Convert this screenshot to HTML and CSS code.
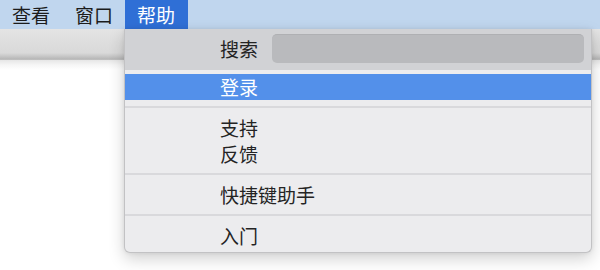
FILE: index.html
```html
<!DOCTYPE html>
<html lang="zh-CN">
<head>
<meta charset="utf-8">
<link rel="stylesheet" href="styles.css">
</head>
<body>
<div class="menubar">
  <div class="mb-item">查看</div>
  <div class="mb-item">窗口</div>
  <div class="mb-item active">帮助</div>
</div>
<div class="toolbar"></div>
<div class="content"></div>

<div class="menu">
  <div class="search-row">
    <span class="label">搜索</span>
    <div class="search-field"></div>
  </div>
  <div class="menu-body">
    <div class="item hl">登录</div>
    <div class="sep"></div>
    <div class="item">支持</div>
    <div class="item">反馈</div>
    <div class="sep"></div>
    <div class="item">快捷键助手</div>
    <div class="sep"></div>
    <div class="item">入门</div>
  </div>
</div>
</body>
</html>
```

FILE: styles.css
```css
* { box-sizing: border-box; }
html, body {
  margin: 0;
  padding: 0;
  width: 600px;
  height: 270px;
  overflow: hidden;
  background: #ffffff;
  font-family: "Noto Sans CJK SC", "Noto Sans", sans-serif;
}
.menubar {
  height: 29px;
  background: #c0d6ee;
  display: flex;
  align-items: stretch;
  font-size: 19px;
  color: #1c1c1c;
}
.mb-item {
  padding: 0 12px;
  display: flex;
  align-items: center;
  line-height: 1;
}
.mb-item:first-child { padding-left: 12px; padding-right: 13px; }
.mb-item.active {
  background: #2f6fd6;
  color: #ffffff;
  padding-right: 13px;
}
.toolbar {
  height: 31px;
  background: linear-gradient(to bottom, #e4e4e4 0px, #d9d9d9 24px, #c8c8c8 27px, #b7b7b7 30px, #c4c4c4 31px);
}
.content {
  height: 210px;
  background: linear-gradient(to bottom, #e6e6e6 0px, #f6f6f6 5px, #ffffff 10px);
}
.menu {
  position: absolute;
  left: 124px;
  top: 29px;
  width: 468px;
  height: 224px;
  background: #ececee;
  border: 1px solid #c2c2c4;
  border-top: none;
  border-radius: 0 0 6px 6px;
  box-shadow: 0 6px 16px rgba(0,0,0,0.18), 0 0 4px rgba(0,0,0,0.08);
  font-size: 19px;
  color: #242424;
  overflow: hidden;
}
.search-row {
  height: 41px;
  background: #d1d2d5;
  display: flex;
  align-items: center;
  padding-left: 95px;
  padding-right: 7px;
}
.label {
  line-height: 1;
  width: 52px;
  flex: none;
  padding-bottom: 2px;
}
.search-field {
  flex: 1;
  height: 29px;
  margin-top: -2px;
  background: #b9babd;
  border-radius: 5px;
  border-top: 1px solid #afb0b3;
}
.menu-body {
  padding-top: 4px;
}
.item {
  height: 26px;
  line-height: 26px;
  padding-left: 95px;
}
.item.hl {
  background: #5390ea;
  color: #ffffff;
}
.sep {
  height: 2px;
  background: #d9d9dc;
  margin: 6px 0 7px;
}
```
